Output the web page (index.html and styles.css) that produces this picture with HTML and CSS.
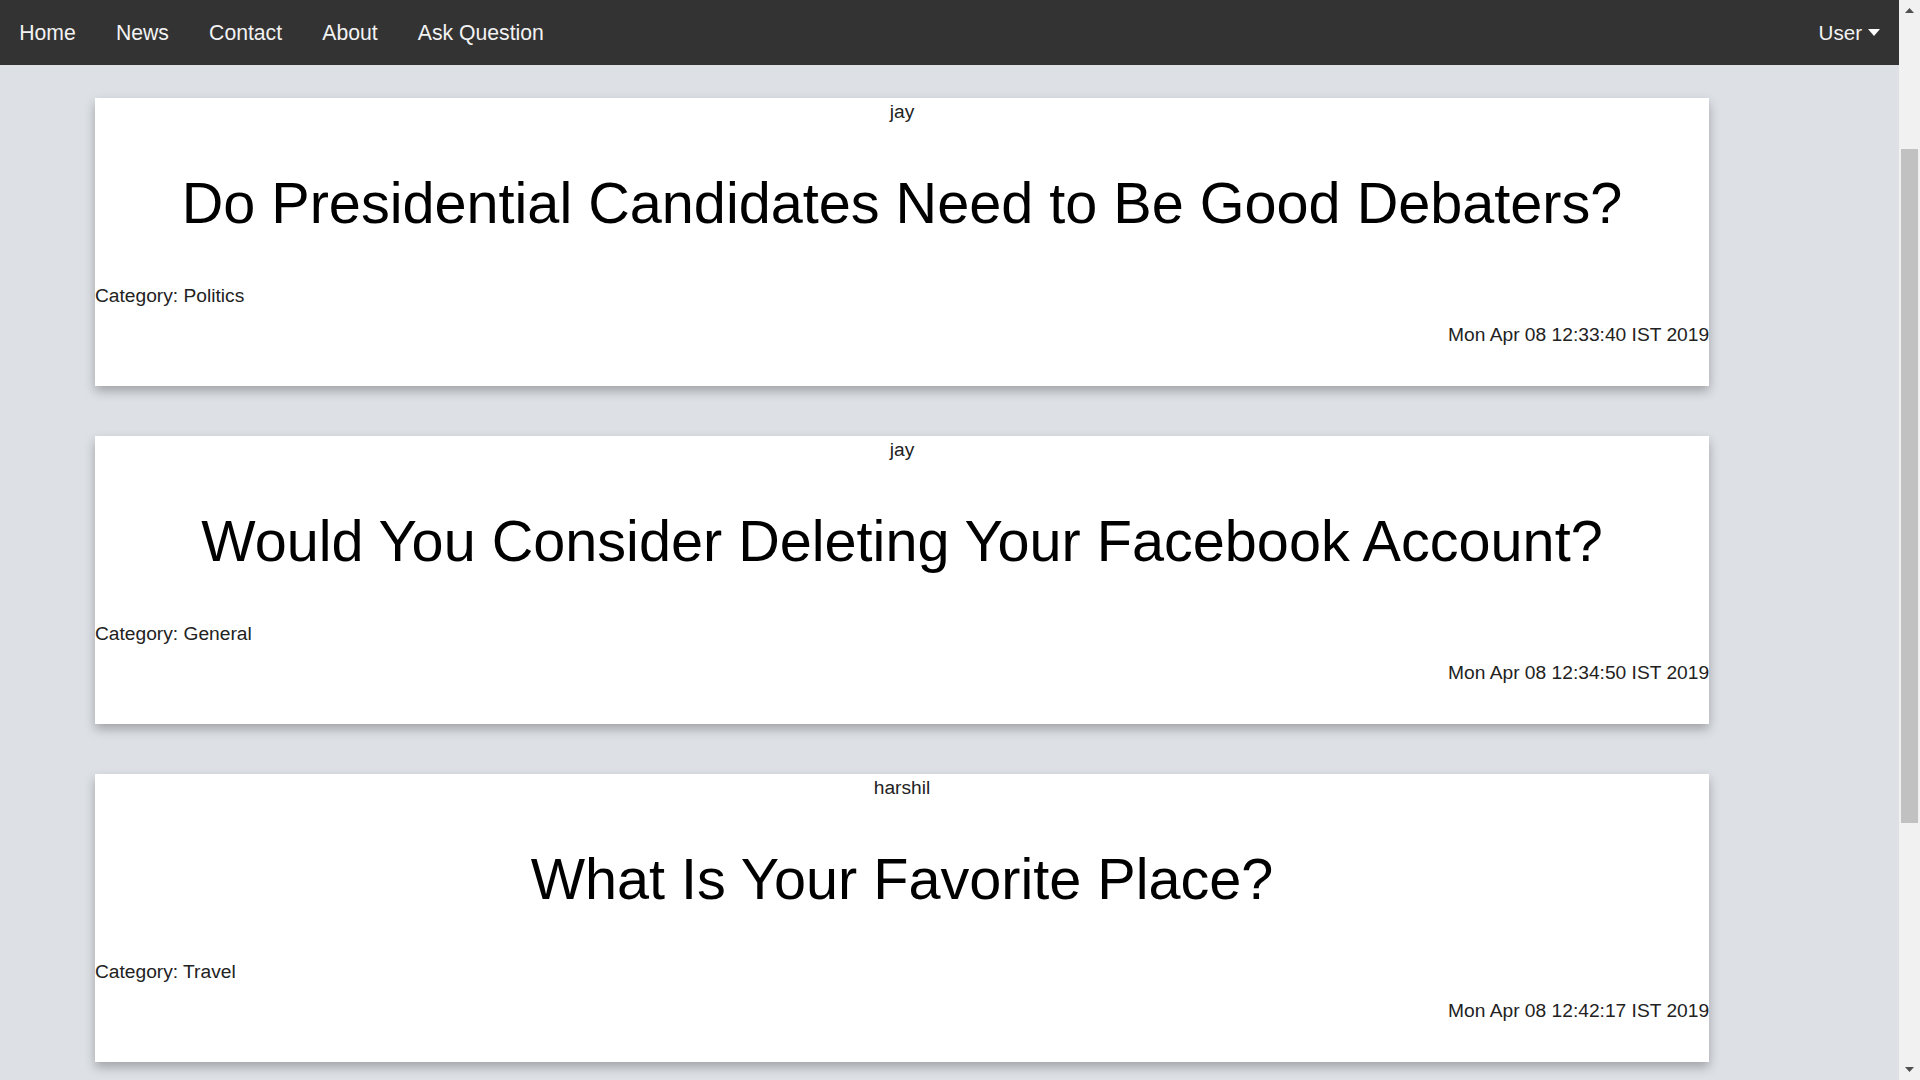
FILE: index.html
```html
<!DOCTYPE html>
<html lang="en">
<head>
<meta charset="utf-8">
<title>Questions</title>
<link rel="stylesheet" href="styles.css">
</head>
<body>
<div class="page">
  <div class="main">
    <nav class="navbar">
      <a class="nav-link" href="#">Home</a>
      <a class="nav-link" href="#">News</a>
      <a class="nav-link" href="#">Contact</a>
      <a class="nav-link" href="#">About</a>
      <a class="nav-link" href="#">Ask Question</a>
      <div class="nav-spacer"></div>
      <a class="nav-link dropbtn" href="#">User <svg class="caret" width="12" height="7" viewBox="0 0 12 7"><path d="M0 0H12L6 7Z" fill="#ffffff"/></svg></a>
    </nav>
    <div class="content">
      <div class="card">
        <p class="author">jay</p>
        <h1 class="title">Do Presidential Candidates Need to Be Good Debaters?</h1>
        <p class="category">Category: Politics</p>
        <p class="date">Mon Apr 08 12:33:40 IST 2019</p>
      </div>
      <div class="card">
        <p class="author">jay</p>
        <h1 class="title">Would You Consider Deleting Your Facebook Account?</h1>
        <p class="category">Category: General</p>
        <p class="date">Mon Apr 08 12:34:50 IST 2019</p>
      </div>
      <div class="card">
        <p class="author">harshil</p>
        <h1 class="title">What Is Your Favorite Place?</h1>
        <p class="category">Category: Travel</p>
        <p class="date">Mon Apr 08 12:42:17 IST 2019</p>
      </div>
    </div>
  </div>
  <div class="scrollbar">
    <div class="sb-btn"><svg width="9" height="5" viewBox="0 0 9 5"><path d="M0 5H9L4.5 0Z" fill="#505050"/></svg></div>
    <div class="sb-thumb"></div>
    <div class="sb-fill"></div>
    <div class="sb-btn"><svg width="9" height="5" viewBox="0 0 9 5"><path d="M0 0H9L4.5 5Z" fill="#505050"/></svg></div>
  </div>
</div>
</body>
</html>
```
FILE: styles.css
```css
html, body {
  margin: 0;
  padding: 0;
  height: 100%;
  overflow: hidden;
}

body {
  font-family: "Liberation Sans", Arial, sans-serif;
  background: #dde0e5;
}

.page {
  display: flex;
  height: 100vh;
}

.main {
  flex: 1;
  min-width: 0;
  background: #dde0e5;
  overflow: hidden;
}

.navbar {
  height: 65px;
  background: #333333;
  display: flex;
  align-items: center;
}

.nav-link {
  color: #f2f2f2;
  text-decoration: none;
  font-size: 21.2px;
  padding: 0 20.1px;
  display: flex;
  align-items: center;
  white-space: pre;
}

.nav-link:first-child {
  padding-left: 19.2px;
}

.dropbtn {
  font-size: 20.6px;
  padding-right: 19.2px;
}

.nav-spacer {
  flex: 1;
}

.caret {
  display: block;
  margin-top: -1px;
}

.content {
  padding-top: 33px;
}

.card {
  background: #ffffff;
  margin-left: 5%;
  width: 85%;
  margin-bottom: 50px;
  padding: 3px 0 40px;
  box-shadow: 0 5px 10px rgba(0, 0, 0, 0.28);
}

.author,
.category,
.date {
  margin: 0;
  font-size: 19.2px;
  line-height: 22px;
  color: #222222;
}

.author {
  text-align: center;
}

.title {
  margin: 47px 0 0;
  font-size: 57.6px;
  line-height: 66px;
  font-weight: normal;
  text-align: center;
  color: #000000;
}

.category {
  margin-top: 49px;
}

.date {
  margin-top: 17px;
  text-align: right;
}

.scrollbar {
  width: 21px;
  background: #f1f1f1;
  display: flex;
  flex-direction: column;
  align-items: center;
}

.sb-btn {
  height: 21px;
  width: 21px;
  display: flex;
  align-items: center;
  justify-content: center;
}

.sb-btn svg {
  display: block;
}

.sb-thumb {
  margin-top: 128px;
  width: 17px;
  height: 674px;
  background: #c1c1c1;
}

.sb-fill {
  flex: 1;
}
```
